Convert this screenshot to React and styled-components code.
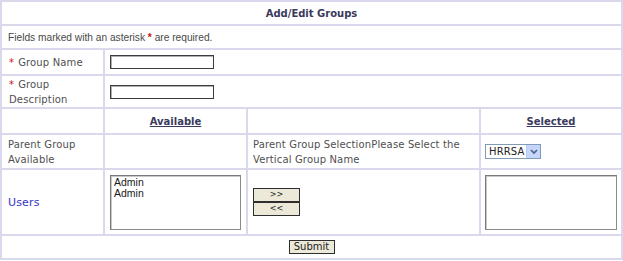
import styled, { createGlobalStyle } from "styled-components";

const GlobalStyle = createGlobalStyle`
  body {
    margin: 0;
    background: #ffffff;
    font-family: "DejaVu Sans", Verdana, sans-serif;
  }
`;

const FormGrid = styled.div`
  display: grid;
  grid-template-columns: 101px 141px 231px 140px;
  grid-template-rows: 22px 22px 24px 31px 24px 33px 64px 22px;
  gap: 2px;
  padding: 2px;
  width: 623px;
  box-sizing: border-box;
  background: #d9d8ec;
  font-size: 10px;
  letter-spacing: 0.15px;
  color: #505050;
`;

const Cell = styled.div`
  background: #ffffff;
  grid-column: ${(p) => p.$span || "auto"};
  display: flex;
  align-items: center;
  justify-content: ${(p) => p.$justify || "flex-start"};
  padding: 0 ${(p) => p.$pad ?? 5}px;
  line-height: 15px;
  min-width: 0;
`;

const Title = styled.span`
  font-weight: bold;
  color: #3a3a5c;
  letter-spacing: 0;
`;

const Note = styled.span`
  font-family: "Liberation Sans", Arial, sans-serif;
  font-size: 10.2px;
  letter-spacing: 0;
  color: #4a4a4a;
`;

const Star = styled.span`
  color: #d01010;
  margin-right: 4px;
`;

const NoteStar = styled.span`
  color: #d01010;
  font-weight: bold;
`;

const ColumnHead = styled.span`
  font-weight: bold;
  color: #3a3a5c;
  letter-spacing: 0;
  text-decoration: underline;
`;

const UsersLabel = styled.span`
  color: #3434c4;
  font-size: 11px;
`;

const TextBox = styled.input`
  width: 104px;
  height: 14px;
  box-sizing: border-box;
  border: 1px solid #3c3c3c;
  box-shadow: inset 1px 1px 0 #b0b0b0;
  background: #ffffff;
  padding: 0;
  margin: 0;
`;

const ListBox = styled.div`
  width: 132px;
  height: 55px;
  box-sizing: border-box;
  border: 1px solid #8a8a8a;
  border-top-color: #7a7a7a;
  border-left-color: #7a7a7a;
  box-shadow: inset 1px 1px 0 #c8c8c8;
  background: #ffffff;
  padding: 1px 3px;
  font-family: "Liberation Sans", Tahoma, sans-serif;
  font-size: 10.5px;
  line-height: 11px;
  letter-spacing: 0;
  color: #1a1a1a;
`;

const MoveButtons = styled.div`
  display: flex;
  flex-direction: column;
`;

const ClassicButton = styled.button`
  width: ${(p) => p.$width || 47}px;
  height: 14px;
  box-sizing: border-box;
  border: 1px solid #2e2e2e;
  background: #ece9d8;
  font-family: "DejaVu Sans", Verdana, sans-serif;
  font-size: ${(p) => p.$size || 10}px;
  line-height: 12px;
  color: #222222;
  padding: 0;
  margin: 0;
  cursor: pointer;
`;

const DropDown = styled.div`
  display: flex;
  align-items: center;
  justify-content: space-between;
  width: 56px;
  height: 15px;
  box-sizing: border-box;
  border: 1px solid #7f9db9;
  background: #ffffff;
  font-size: 10px;
  color: #222222;
  padding-left: 3px;
`;

const DropArrow = styled.span`
  display: flex;
  align-items: center;
  justify-content: center;
  width: 13px;
  height: 13px;
  background: #c5d5fc;
  border-left: 1px solid #b9cdf6;
`;

const App = () => {
  return (
    <>
      <GlobalStyle />
      <FormGrid>
        <Cell $span="1 / 5" $justify="center">
          <Title>Add/Edit Groups</Title>
        </Cell>
        <Cell $span="1 / 5" $pad={6}>
          <Note>
            Fields marked with an asterisk <NoteStar>*</NoteStar> are required.
          </Note>
        </Cell>

        <Cell $pad={7}>
          <span><Star>*</Star>Group Name</span>
        </Cell>
        <Cell $span="2 / 5">
          <TextBox type="text" />
        </Cell>

        <Cell $pad={7}>
          <span><Star>*</Star>Group<br />Description</span>
        </Cell>
        <Cell $span="2 / 5">
          <TextBox type="text" />
        </Cell>

        <Cell />
        <Cell $justify="center">
          <ColumnHead>Available</ColumnHead>
        </Cell>
        <Cell />
        <Cell $justify="center">
          <ColumnHead>Selected</ColumnHead>
        </Cell>

        <Cell $pad={6}>Parent Group Available</Cell>
        <Cell />
        <Cell>Parent Group SelectionPlease Select the Vertical Group Name</Cell>
        <Cell $pad={4}>
          <DropDown>
            HRRSA
            <DropArrow>
              <svg width="8" height="6" viewBox="0 0 8 6">
                <path d="M1 1 L4 4 L7 1" fill="none" stroke="#4d6185" strokeWidth="1.6" />
              </svg>
            </DropArrow>
          </DropDown>
        </Cell>

        <Cell $pad={6}>
          <UsersLabel>Users</UsersLabel>
        </Cell>
        <Cell>
          <ListBox>
            <div>Admin</div>
            <div>Admin</div>
          </ListBox>
        </Cell>
        <Cell>
          <MoveButtons>
            <ClassicButton $size={8}>&gt;&gt;</ClassicButton>
            <ClassicButton $size={8}>&lt;&lt;</ClassicButton>
          </MoveButtons>
        </Cell>
        <Cell $pad={4}>
          <ListBox />
        </Cell>

        <Cell $span="1 / 5" $justify="center">
          <ClassicButton $width={46}>Submit</ClassicButton>
        </Cell>
      </FormGrid>
    </>
  );
};

export default App;
